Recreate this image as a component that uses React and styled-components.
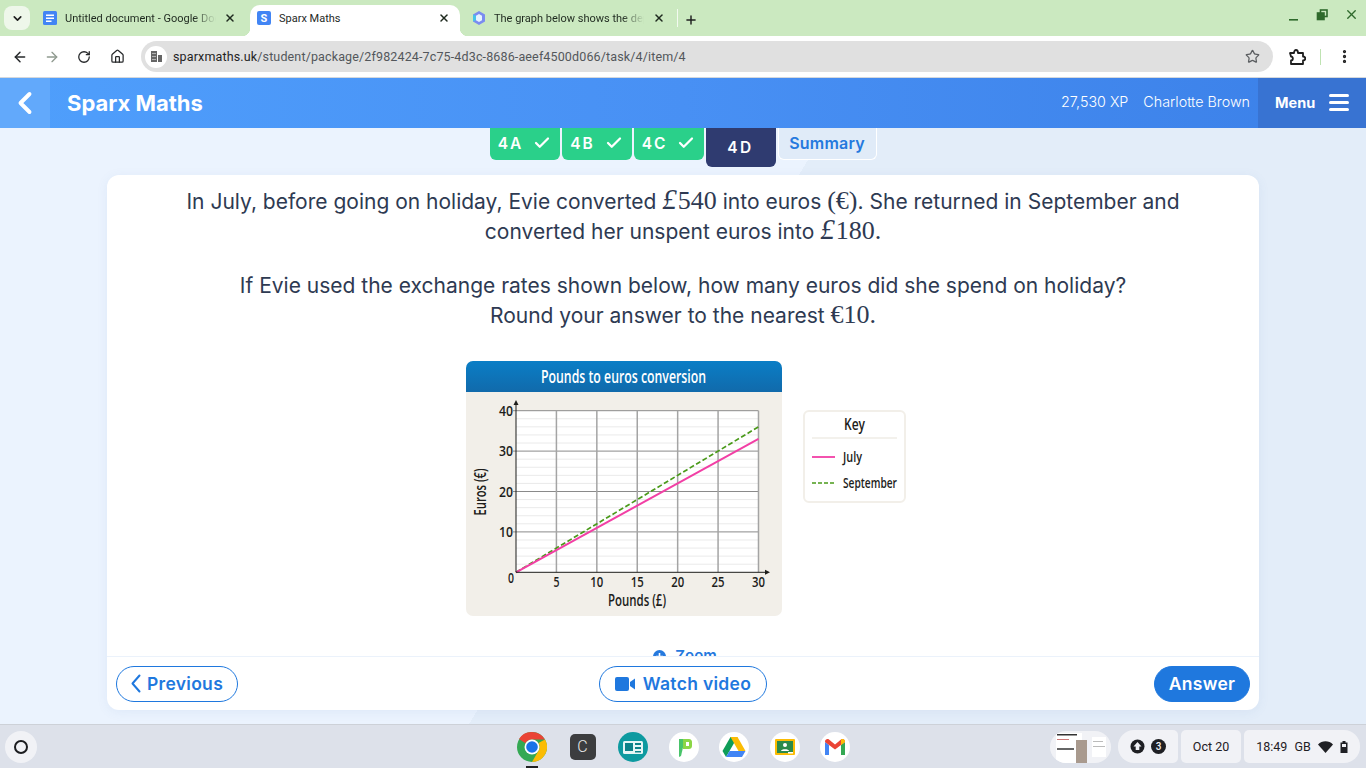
import React from 'react';
import styled, { createGlobalStyle } from 'styled-components';
import {
  ArrowLeft,
  ArrowRight,
  Check,
  ChevronDown,
  ChevronLeft,
  EllipsisVertical,
  House,
  Plus,
  RotateCw,
  Star,
  X,
} from 'lucide-react';

const GlobalStyle = createGlobalStyle`
  html, body {
    margin: 0;
    padding: 0;
    overflow: hidden;
    font-family: Inter, 'Noto Sans', sans-serif;
  }
`;

const Screen = styled.div`
  width: 1366px;
  height: 768px;
  display: flex;
  flex-direction: column;
  overflow: hidden;
`;

/* browser chrome */
const TabStrip = styled.div`
  height: 36px;
  flex: none;
  display: flex;
  align-items: flex-end;
  padding-left: 4px;
  background: #cbe9c0;
  font-family: Roboto, sans-serif;
`;

const TabMenu = styled.div`
  width: 26px;
  height: 24px;
  margin: 0 2px 6px 0;
  flex: none;
  display: flex;
  align-items: center;
  justify-content: center;
  border-radius: 8px;
  background: #eef7ea;
  color: #1f1f1f;
`;

const Tab = styled.div`
  position: relative;
  width: ${(p) => p.$width}px;
  height: 31px;
  flex: none;
  box-sizing: border-box;
  display: flex;
  align-items: center;
  gap: ${(p) => p.$gap}px;
  padding: 0 ${(p) => p.$right}px 5px ${(p) => p.$left}px;
  border-radius: 10px 10px 0 0;
  background: ${(p) => (p.$active ? '#fff' : 'transparent')};
  color: #1f2a1f;
  font-size: 11px;

  ${(p) =>
    p.$active &&
    `
    &::before, &::after {
      content: '';
      position: absolute;
      bottom: 0;
      width: 8px;
      height: 8px;
    }
    &::before {
      left: -8px;
      background: radial-gradient(circle at 0 0, #cbe9c0 8px, #fff 8.5px);
    }
    &::after {
      right: -8px;
      background: radial-gradient(circle at 100% 0, #cbe9c0 8px, #fff 8.5px);
    }
  `}
`;

const TabTitle = styled.span`
  flex: 1;
  min-width: 0;
  white-space: nowrap;
  overflow: hidden;
  ${(p) =>
    p.$fade &&
    `
    -webkit-mask-image: linear-gradient(90deg, #000 85%, transparent 100%);
    mask-image: linear-gradient(90deg, #000 85%, transparent 100%);
  `}
`;

const SheetFavicon = styled.span`
  width: 14px;
  height: 14px;
  flex: none;
  display: flex;
  align-items: center;
  justify-content: center;
  border-radius: 2px;
  background: #4285f4;
  color: #fff;
  font-size: 11px;
  font-weight: 700;
`;

const TabSeparator = styled.span`
  width: 1px;
  height: 18px;
  margin: 0 6px 9px 7px;
  background: #f3faf0;
`;

const AddTab = styled.span`
  display: flex;
  margin-bottom: 9px;
  color: #1f1f1f;
`;

const WindowControls = styled.div`
  margin-left: auto;
  display: flex;
  align-items: center;
  gap: 15px;
  padding: 0 7px 14px 0;
  color: #2f6a2c;
`;

const Toolbar = styled.div`
  height: 42px;
  flex: none;
  box-sizing: border-box;
  display: flex;
  align-items: center;
  padding: 0 11px;
  background: #fff;
  border-bottom: 1px solid #d5d8dc;
  border-radius: 10px 10px 0 0;
  color: #2b2b2b;
`;

const NavIcon = styled.span`
  width: 18px;
  display: flex;
  justify-content: center;
  flex: none;
  margin-right: ${(p) => p.$gap}px;
  color: ${(p) => (p.$muted ? '#8f9a8f' : '#26282a')};
`;

const UrlPill = styled.div`
  width: 1132px;
  height: 31px;
  flex: none;
  box-sizing: border-box;
  display: flex;
  align-items: center;
  padding: 0 13px 0 4px;
  border-radius: 16px;
  background: #e0e0e0;
  font-family: Roboto, sans-serif;
  font-size: 12.5px;
  letter-spacing: 0.14px;
  color: #53575b;
`;

const SiteBadge = styled.span`
  width: 22px;
  height: 22px;
  margin-right: 6px;
  flex: none;
  display: flex;
  align-items: center;
  justify-content: center;
  border-radius: 50%;
  background: #fff;
`;

const Host = styled.span`
  color: #1f1f1f;
`;

const UrlStar = styled.span`
  margin-left: auto;
  display: flex;
  color: #5a5d60;
`;

const ToolbarEnd = styled.div`
  display: flex;
  align-items: center;
  margin-left: 15px;
`;

const ToolbarDivider = styled.span`
  width: 1px;
  height: 16px;
  margin: 0 15px 0 14px;
  background: #bfe3b2;
`;

/* sparx header */
const Header = styled.header`
  height: 50px;
  flex: none;
  display: flex;
  align-items: stretch;
  background: linear-gradient(90deg, #4f9ffc 0%, #4890f4 50%, #3b80e8 100%);
  color: #fff;
`;

const BackBox = styled.div`
  width: 50px;
  display: flex;
  align-items: center;
  justify-content: center;
  background: #62a9fb;
`;

const Brand = styled.div`
  margin-left: 17px;
  display: flex;
  align-items: center;
  font-size: 22px;
  font-weight: 700;
  letter-spacing: -0.02px;
`;

const HeaderInfo = styled.div`
  margin-left: auto;
  margin-right: 8px;
  display: flex;
  align-items: center;
  gap: 15px;
  padding-bottom: 4px;
  font-size: 14.3px;
  font-weight: 300;
`;

const MenuBlock = styled.div`
  width: 108px;
  box-sizing: border-box;
  display: flex;
  align-items: center;
  justify-content: space-between;
  padding: 0 17px 2px;
  background: #3873d2;
  font-size: 14.5px;
  font-weight: 700;
`;

const Burger = styled.span`
  width: 20px;
  display: flex;
  flex-direction: column;
  gap: 4px;

  i {
    display: block;
    height: 3px;
    border-radius: 2px;
    background: #fff;
  }
`;

/* page */
const Main = styled.main`
  flex: 1;
  min-height: 0;
  display: flex;
  flex-direction: column;
  align-items: center;
  background: linear-gradient(121deg, #ebf3fe 709px, #e3edf9 709px);
`;

const TaskTabs = styled.nav`
  height: 47px;
  flex: none;
  display: flex;
  align-items: flex-start;
  gap: 2px;
`;

const TaskTab = styled.div`
  width: 70px;
  height: 32px;
  box-sizing: border-box;
  display: flex;
  align-items: center;
  justify-content: center;
  gap: 10px;
  padding-bottom: 2px;
  border-radius: 0 0 6px 6px;
  background: #2ad08a;
  color: #fff;
  font-size: 15.5px;
  font-weight: 600;
  letter-spacing: 2px;
`;

const CurrentTab = styled(TaskTab)`
  height: 39px;
  padding-bottom: 0;
  background: #2f3b70;
  letter-spacing: 2.4px;
`;

const SummaryTab = styled(TaskTab)`
  width: 99px;
  background: #e0ebf8;
  border: 1px solid #fff;
  border-top: 0;
  color: #2579de;
  font-size: 16px;
  letter-spacing: 0.2px;
`;

const Card = styled.section`
  width: 1152px;
  height: 535px;
  flex: none;
  display: flex;
  flex-direction: column;
  border-radius: 12px;
  background: #fff;
  box-shadow: 0 2px 12px rgba(80, 120, 180, 0.08);
  overflow: hidden;
`;

const Question = styled.div`
  flex: 1;
  min-height: 0;
  padding-top: 12px;
  overflow: hidden;
  text-align: center;
  color: #2e3a52;
  font-size: 21px;
  line-height: 30px;
`;

const Para = styled.p`
  margin: 0 0 24px;
`;

const MathText = styled.span`
  font-family: 'Liberation Serif', serif;
  font-size: 26px;
  line-height: 0;
`;

const Pound = styled.i`
  font-style: italic;
  font-size: 29px;
  line-height: 0;
  margin-right: 1px;
`;

const FigureRow = styled.div`
  margin-top: 30px;
  padding-left: 6px;
  display: flex;
  justify-content: center;
`;

const ZoomLink = styled.div`
  margin-top: 31px;
  display: flex;
  align-items: center;
  justify-content: center;
  gap: 9px;
  padding-left: 4px;
  color: #2579de;
  font-size: 15px;
  font-weight: 600;
  line-height: 16px;
`;

const Footer = styled.div`
  height: 54px;
  flex: none;
  box-sizing: border-box;
  display: grid;
  grid-template-columns: 1fr auto 1fr;
  align-items: center;
  padding: 0 9px;
  border-top: 1px solid #ebf2fb;
`;

const PillButton = styled.div`
  height: 36px;
  width: ${(p) => p.$width}px;
  box-sizing: border-box;
  justify-self: ${(p) => (p.$end ? 'end' : 'start')};
  display: flex;
  align-items: center;
  justify-content: center;
  gap: ${(p) => p.$gap || 0}px;
  border: 1px solid #1f78de;
  border-radius: 18px;
  background: ${(p) => (p.$solid ? '#1f78de' : '#fff')};
  color: ${(p) => (p.$solid ? '#fff' : '#1f78de')};
  font-size: 17.5px;
  font-weight: 600;
  letter-spacing: 0.3px;
`;

/* chromeos shelf */
const Shelf = styled.footer`
  height: 44px;
  flex: none;
  box-sizing: border-box;
  display: grid;
  grid-template-columns: 1fr auto 1fr;
  align-items: center;
  padding: 0 6px 0 5px;
  background: #dde1ea;
  border-top: 1px solid #cdd1d8;
  font-family: Roboto, sans-serif;
`;

const Launcher = styled.div`
  width: 32px;
  height: 32px;
  display: flex;
  align-items: center;
  justify-content: center;
  border-radius: 50%;
  background: #f1f2f6;

  i {
    width: 10px;
    height: 10px;
    border: 2px solid #1c1d20;
    border-radius: 50%;
  }
`;

const Apps = styled.div`
  display: flex;
  align-items: center;
  gap: 20.5px;
  margin-left: 2px;
`;

const AppIcon = styled.div`
  position: relative;
  width: 30px;
  height: 30px;
  display: flex;
  align-items: center;
  justify-content: center;

  ${(p) =>
    p.$open &&
    `
    &::after {
      content: '';
      position: absolute;
      left: 9px;
      bottom: -6px;
      width: 12px;
      height: 2px;
      background: #202124;
    }
  `}
`;

const TerminalIcon = styled.span`
  width: 26px;
  height: 26px;
  display: flex;
  align-items: center;
  justify-content: center;
  border-radius: 5px;
  background: #3c3d3f;
  color: #e8e8e8;
  font-size: 16px;
  font-weight: 300;
`;

const Tray = styled.div`
  justify-self: end;
  display: flex;
  align-items: center;
  gap: 3px;
  color: #1f2024;
  font-size: 12.5px;
`;

const Holding = styled.div`
  width: 61px;
  height: 32px;
  margin-right: 4px;
  border-radius: 16px;
  background: #f1f2f6;
  overflow: hidden;
`;

const TrayPill = styled.div`
  width: ${(p) => p.$width}px;
  height: 33px;
  box-sizing: border-box;
  display: flex;
  align-items: center;
  justify-content: center;
  gap: ${(p) => p.$gap || 0}px;
  border-radius: ${(p) => p.$radius};
  background: #f1f2f6;
`;

const CountBadge = styled.span`
  width: 15px;
  height: 15px;
  display: flex;
  align-items: center;
  justify-content: center;
  border-radius: 50%;
  background: #1f2024;
  color: #f1f2f6;
  font-size: 10px;
  font-weight: 500;
`;

const ChromeLogo = () => (
  <svg width="30" height="30" viewBox="0 0 30 30">
    <circle cx="15" cy="15" r="15" fill="#34a853" />
    <path d="M15 0a15 15 0 0 1 13 7.500H15A7.500 7.500 0 0 0 8.500 11.200L2 7A15 15 0 0 1 15 0z" fill="#ea4335" />
    <path d="M28 7.500A15 15 0 0 1 15 30l6.500-11.200A7.500 7.500 0 0 0 21.500 11z" fill="#fbbc04" />
    <circle cx="15" cy="15" r="7.500" fill="#fff" />
    <circle cx="15" cy="15" r="5.800" fill="#1a73e8" />
  </svg>
);

const NewsLogo = () => (
  <svg width="30" height="30" viewBox="0 0 30 30">
    <circle cx="15" cy="15" r="15" fill="#0d9aa0" />
    <rect x="5" y="9" width="20" height="13" rx="1.500" fill="#e6f6f6" />
    <rect x="7" y="11" width="8" height="8" fill="#0d8289" />
    <rect x="17" y="11" width="6" height="2" fill="#0d8289" />
    <rect x="17" y="15" width="6" height="2" fill="#0d8289" />
    <rect x="17" y="19" width="6" height="1.500" fill="#0d8289" />
  </svg>
);

const PadletLogo = () => (
  <svg width="30" height="30" viewBox="0 0 30 30">
    <circle cx="15" cy="15" r="15" fill="#fff" />
    <path d="M10 7h6l-4 17-2 1z" fill="#49c46a" />
    <path d="M14 7h6c2 0 3 1.500 3 3v4c0 2-1.500 3-3 3h-6z" fill="#8bd646" />
    <path d="M17 10h3v4h-3z" fill="#fff" />
  </svg>
);

const DriveLogo = () => (
  <svg width="30" height="30" viewBox="0 0 30 30">
    <circle cx="15" cy="15" r="15" fill="#fff" />
    <path d="M11.500 5h7l-8 14-3.500 6-3.500-6z" fill="#0f9d58" />
    <path d="M11.500 5h7l8 14h-7z" fill="#fbbc04" />
    <path d="M10.500 19h16L23 25H7z" fill="#4285f4" />
  </svg>
);

const ClassroomLogo = () => (
  <svg width="30" height="30" viewBox="0 0 30 30">
    <circle cx="15" cy="15" r="15" fill="#fff" />
    <rect x="5" y="7" width="20" height="16" rx="1" fill="#fbbc04" />
    <rect x="7" y="9" width="16" height="12" fill="#2c8a4b" />
    <circle cx="15" cy="13" r="2" fill="#fff" />
    <path d="M11 19c0-2.500 8-2.500 8 0z" fill="#fff" />
    <rect x="18" y="20" width="5" height="1.500" fill="#fff" />
  </svg>
);

const GmailLogo = () => (
  <svg width="30" height="30" viewBox="0 0 30 30">
    <circle cx="15" cy="15" r="15" fill="#fff" />
    <path d="M5 10v13h4V13z" fill="#4285f4" />
    <path d="M21 13v10h4V10z" fill="#34a853" />
    <path d="M5 10c0-3 2.500-3.500 4-2.500l6 5 6-5c1.500-1 4-.500 4 2.500l-10 7.500z" fill="#ea4335" />
    <path d="M21 7.500c1.500-1 4-.500 4 2.500l-4 3z" fill="#fbbc04" />
  </svg>
);

const plotX = (v) => 50 + v * 8.083;
const plotY = (v) => 211.3 - v * 4.04;
const MINOR_Y = [2, 4, 6, 8, 12, 14, 16, 18, 22, 24, 26, 28, 32, 34, 36, 38];
const TICKS_X = [5, 10, 15, 20, 25, 30];
const TICKS_Y = [10, 20, 30, 40];

const ChartText = ({ children, length, ...rest }) => (
  <text
    fontFamily="'Open Sans', sans-serif"
    fontWeight="600"
    fill="#1d1d1b"
    textLength={length}
    lengthAdjust="spacingAndGlyphs"
    {...rest}
  >
    {children}
  </text>
);

const ConversionChart = () => (
  <svg width="440" height="256" viewBox="0 0 440 256">
    <defs>
      <linearGradient id="chartHead" x1="0" y1="0" x2="0" y2="1">
        <stop offset="0" stopColor="#0a7ec6" />
        <stop offset="1" stopColor="#116aab" />
      </linearGradient>
    </defs>
    <rect x="0" y="0" width="316" height="255" rx="7" fill="#f2efe9" />
    <path d="M0 31V7a7 7 0 0 1 7-7h302a7 7 0 0 1 7 7v24z" fill="url(#chartHead)" />
    <ChartText x="75" y="22" fontSize="18" fill="#fff" length="165">Pounds to euros conversion</ChartText>

    <rect x={plotX(0)} y={plotY(40)} width={plotX(30) - plotX(0)} height={plotY(0) - plotY(40)} fill="#fff" />
    {MINOR_Y.map((v) => (
      <line key={v} x1={plotX(0)} x2={plotX(30)} y1={plotY(v)} y2={plotY(v)} stroke="#eaeaea" strokeWidth="1" />
    ))}
    {TICKS_Y.map((v) => (
      <line key={v} x1={plotX(0) - 3} x2={plotX(30)} y1={plotY(v)} y2={plotY(v)} stroke="#8a8a8a" strokeWidth="1" />
    ))}
    {TICKS_X.map((v) => (
      <line key={v} x1={plotX(v)} x2={plotX(v)} y1={plotY(40)} y2={plotY(0)} stroke="#a4a4a4" strokeWidth="1.500" />
    ))}

    <line x1={plotX(0)} x2={plotX(30)} y1={plotY(0)} y2={plotY(36)} stroke="#4a9a1a" strokeWidth="1.700" strokeDasharray="5 2.500" />
    <line x1={plotX(0)} x2={plotX(30)} y1={plotY(0)} y2={plotY(33)} stroke="#f23fa5" strokeWidth="2" />

    <line x1={plotX(0)} x2={plotX(0)} y1={plotY(0)} y2="42" stroke="#1d1d1b" strokeWidth="1" />
    <line x1={plotX(0)} x2="300" y1={plotY(0)} y2={plotY(0)} stroke="#1d1d1b" strokeWidth="1" />
    <path d="M50 39l2.500 5h-5z" fill="#1d1d1b" />
    <path d="M304 211.300l-5 2.500v-5z" fill="#1d1d1b" />

    {TICKS_Y.map((v) => (
      <ChartText key={v} x="33" y={plotY(v) + 5} fontSize="14" length="14">{v}</ChartText>
    ))}
    {TICKS_X.map((v) => (
      <ChartText
        key={v}
        x={plotX(v)}
        y="226"
        fontSize="14"
        textAnchor="middle"
        length={v === 5 ? 6 : 13}
      >
        {v}
      </ChartText>
    ))}
    <ChartText x="42" y="222" fontSize="14" length="6">0</ChartText>
    <ChartText x="142" y="245" fontSize="16" length="58">Pounds (£)</ChartText>
    <ChartText x="0" y="0" fontSize="16" length="47" transform="translate(20 154.500) rotate(-90)">Euros (€)</ChartText>

    <rect x="338" y="50" width="101" height="91" rx="5" fill="#fff" stroke="#f2efe9" strokeWidth="2" />
    <ChartText x="378" y="69" fontSize="17" length="21">Key</ChartText>
    <line x1="346" x2="431" y1="77" y2="77" stroke="#efece6" strokeWidth="1.500" />
    <line x1="346" x2="369" y1="96" y2="96" stroke="#f23fa5" strokeWidth="1.800" />
    <ChartText x="377" y="101" fontSize="14.500" length="19">July</ChartText>
    <line x1="346" x2="369" y1="122" y2="122" stroke="#4a9a1a" strokeWidth="1.300" strokeDasharray="4 2" />
    <ChartText x="377" y="127" fontSize="14.500" length="54">September</ChartText>
  </svg>
);

const App = () => (
  <Screen>
    <GlobalStyle />
    <TabStrip>
      <TabMenu>
        <ChevronDown size={13} strokeWidth={3} />
      </TabMenu>
      <Tab $width={218} $left={11} $right={14} $gap={8}>
        <svg width="14" height="14" viewBox="0 0 14 14" style={{ flex: 'none' }}>
          <rect width="14" height="14" rx="1.500" fill="#4285f4" />
          <rect x="3" y="3.500" width="8" height="1.500" fill="#fff" />
          <rect x="3" y="6.500" width="8" height="1.500" fill="#fff" />
          <rect x="3" y="9.500" width="5.500" height="1.500" fill="#fff" />
        </svg>
        <TabTitle $fade>Untitled document - Google Docs</TabTitle>
        <X size={12} strokeWidth={3} />
      </Tab>
      <Tab $active $width={210} $left={7} $right={10} $gap={8}>
        <SheetFavicon>S</SheetFavicon>
        <TabTitle>Sparx Maths</TabTitle>
        <X size={12} strokeWidth={3} />
      </Tab>
      <Tab $width={210} $left={13} $right={5} $gap={9}>
        <svg width="12" height="14" viewBox="0 0 12 14" style={{ flex: 'none' }}>
          <path d="M6 0l6 3.500v7L6 14l-6-3.500v-7z" fill="#7b8cf0" />
          <path d="M6 3l3 1.700v4.600L6 11 3 9.300V4.700z" fill="#e6f3ff" />
          <path d="M0 3.500L3 4.700v4.600L0 10.500z" fill="#46c4e8" />
        </svg>
        <TabTitle $fade>The graph below shows the depth of water</TabTitle>
        <X size={12} strokeWidth={3} />
      </Tab>
      <TabSeparator />
      <AddTab>
        <Plus size={14} strokeWidth={2.500} />
      </AddTab>
      <WindowControls>
        <svg width="14" height="14" viewBox="0 0 14 14">
          <rect x="3" y="11" width="9" height="1.600" fill="currentColor" />
        </svg>
        <svg width="14" height="14" viewBox="0 0 14 14" fill="none" stroke="currentColor" strokeWidth="1.600">
          <rect x="5.500" y="2" width="6.500" height="6.500" />
          <rect x="2.500" y="5" width="6.500" height="6.500" fill="currentColor" />
        </svg>
        <X size={15} strokeWidth={2.200} />
      </WindowControls>
    </TabStrip>

    <Toolbar>
      <NavIcon $gap={14}><ArrowLeft size={16} strokeWidth={2.200} /></NavIcon>
      <NavIcon $gap={14} $muted><ArrowRight size={16} strokeWidth={2} /></NavIcon>
      <NavIcon $gap={15}><RotateCw size={14} strokeWidth={2.200} /></NavIcon>
      <NavIcon $gap={15}><House size={15} strokeWidth={2} /></NavIcon>
      <UrlPill>
        <SiteBadge>
          <svg width="13" height="13" viewBox="0 0 13 13" fill="#666">
            <path d="M1 1h6v11H1zM8 5h4v7H8z" />
            <path d="M2.500 3h1v1h-1zM4.500 3h1v1h-1zM2.500 6h1v1h-1zM4.500 6h1v1h-1zM2.500 9h1v1h-1zM4.500 9h1v1h-1z" fill="#fff" />
          </svg>
        </SiteBadge>
        <Host>sparxmaths.uk</Host>/student/package/2f982424-7c75-4d3c-8686-aeef4500d066/task/4/item/4
        <UrlStar><Star size={15} strokeWidth={2} /></UrlStar>
      </UrlPill>
      <ToolbarEnd>
        <svg width="18" height="18" viewBox="0 0 18 18" fill="none" stroke="#1f1f1f" strokeWidth="1.800" strokeLinejoin="round">
          <path d="M2 5h4c0-4 4-4 4 0h5v3.500c3 0 3 4 0 4V16H3v-3.500c2.500 0 2.500-4 0-4z" />
        </svg>
        <ToolbarDivider />
        <EllipsisVertical size={17} strokeWidth={2.600} color="#1f1f1f" />
      </ToolbarEnd>
    </Toolbar>

    <Header>
      <BackBox>
        <ChevronLeft size={36} strokeWidth={2.600} />
      </BackBox>
      <Brand>Sparx Maths</Brand>
      <HeaderInfo>
        <span>27,530 XP</span>
        <span>Charlotte Brown</span>
      </HeaderInfo>
      <MenuBlock>
        Menu
        <Burger><i /><i /><i /></Burger>
      </MenuBlock>
    </Header>

    <Main>
      <TaskTabs>
        <TaskTab>4A <Check size={18} strokeWidth={3} /></TaskTab>
        <TaskTab>4B <Check size={18} strokeWidth={3} /></TaskTab>
        <TaskTab>4C <Check size={18} strokeWidth={3} /></TaskTab>
        <CurrentTab>4D</CurrentTab>
        <SummaryTab>Summary</SummaryTab>
      </TaskTabs>
      <Card>
        <Question>
          <Para>
            In July, before going on holiday, Evie converted <MathText><Pound>£</Pound>540</MathText> into euros <MathText>(€)</MathText>. She returned in September and
            <br />
            converted her unspent euros into <MathText><Pound>£</Pound>180.</MathText>
          </Para>
          <Para>
            If Evie used the exchange rates shown below, how many euros did she spend on holiday?
            <br />
            Round your answer to the nearest <MathText>€10.</MathText>
          </Para>
          <FigureRow>
            <ConversionChart />
          </FigureRow>
          <ZoomLink>
            <svg width="13" height="13" viewBox="0 0 13 13">
              <circle cx="6.500" cy="6.500" r="6.500" fill="#2579de" />
              <path d="M6.500 3v7M3 6.500h7" stroke="#fff" strokeWidth="1.600" />
            </svg>
            Zoom
          </ZoomLink>
        </Question>
        <Footer>
          <PillButton $width={122} $gap={6}>
            <svg width="10" height="19" viewBox="0 0 10 19" fill="none" stroke="currentColor" strokeWidth="2" strokeLinecap="round" strokeLinejoin="round">
              <path d="M8.500 1.500L1.500 9.500l7 8" />
            </svg>
            Previous
          </PillButton>
          <PillButton $width={168} $gap={8}>
            <svg width="20" height="14" viewBox="0 0 20 14" fill="currentColor">
              <rect x="0" y="0" width="14" height="14" rx="2" />
              <path d="M15 5l5-3.500v11L15 9z" />
            </svg>
            Watch video
          </PillButton>
          <PillButton $width={96} $solid $end>Answer</PillButton>
        </Footer>
      </Card>
    </Main>

    <Shelf>
      <Launcher><i /></Launcher>
      <Apps>
        <AppIcon $open><ChromeLogo /></AppIcon>
        <AppIcon><TerminalIcon>C</TerminalIcon></AppIcon>
        <AppIcon><NewsLogo /></AppIcon>
        <AppIcon><PadletLogo /></AppIcon>
        <AppIcon><DriveLogo /></AppIcon>
        <AppIcon><ClassroomLogo /></AppIcon>
        <AppIcon><GmailLogo /></AppIcon>
      </Apps>
      <Tray>
        <Holding>
          <svg width="61" height="32" viewBox="0 0 61 32">
            <rect x="6" y="2" width="26" height="30" fill="#fff" />
            <rect x="7" y="3" width="20" height="1.500" fill="#333" />
            <rect x="7" y="8" width="12" height="1" fill="#c77" />
            <rect x="7" y="17" width="17" height="2" fill="#666" />
            <rect x="26" y="9" width="11" height="23" fill="#a99a8e" />
            <rect x="42" y="6" width="14" height="20" fill="#fff" />
            <rect x="43" y="10" width="10" height="1" fill="#bbb" />
            <rect x="43" y="15" width="12" height="1" fill="#bbb" />
          </svg>
        </Holding>
        <TrayPill $width={60} $gap={6} $radius="16px 5px 5px 16px">
          <svg width="15" height="15" viewBox="0 0 15 15">
            <circle cx="7.500" cy="7.500" r="7" fill="#1f2024" />
            <path d="M7.500 3l4 4.500H9.300V11H5.700V7.500H3.500z" fill="#f1f2f6" />
          </svg>
          <CountBadge>3</CountBadge>
        </TrayPill>
        <TrayPill $width={60} $radius="5px">Oct 20</TrayPill>
        <TrayPill $width={116} $gap={7} $radius="5px 16px 16px 5px">
          <span>18:49</span>
          <span>GB</span>
          <svg width="15" height="12" viewBox="0 0 15 12" fill="#1f2024">
            <path d="M0 3.500C4-.8 11-.8 15 3.500L7.500 12z" />
          </svg>
          <svg width="8" height="12" viewBox="0 0 8 12" fill="#1f2024">
            <rect x="2.500" y="0" width="3" height="2" />
            <path d="M0.500 1.500h7V12h-7zM2 3v3h4V3z" fillRule="evenodd" />
          </svg>
        </TrayPill>
      </Tray>
    </Shelf>
  </Screen>
);

export default App;
